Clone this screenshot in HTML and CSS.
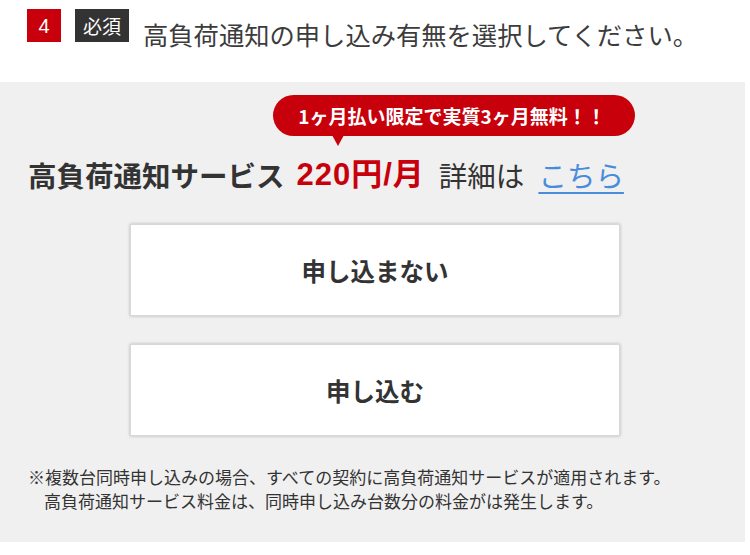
FILE: index.html
```html
<!DOCTYPE html>
<html lang="ja">
<head>
<meta charset="utf-8">
<link rel="stylesheet" href="styles.css">
</head>
<body>
<div class="header">
  <span class="badge badge-num">4</span>
  <span class="badge badge-req">必須</span>
  <span class="title">高負荷通知の申し込み有無を選択してください。</span>
</div>
<div class="panel">
  <div class="promo-row">
    <div class="promo">1ヶ月払い限定で実質3ヶ月無料！！</div>
  </div>
  <div class="service">
    <span class="name">高負荷通知サービス</span>
    <span class="price">220円/月</span>
    <span class="detail">詳細は</span>
    <a class="link" href="#">こちら</a>
  </div>
  <div class="buttons">
    <button class="choice">申し込まない</button>
    <button class="choice">申し込む</button>
  </div>
  <div class="notes">
    <p class="note">※複数台同時申し込みの場合、すべての契約に高負荷通知サービスが適用されます。</p>
    <p class="note indent">高負荷通知サービス料金は、同時申し込み台数分の料金がは発生します。</p>
  </div>
</div>
</body>
</html>
```

FILE: styles.css
```css
* { box-sizing: border-box; }
html, body {
  margin: 0;
  padding: 0;
  background: #fff;
  font-family: "Noto Sans CJK JP", "Noto Sans", sans-serif;
  color: #333;
}
.header {
  height: 82px;
  display: flex;
  align-items: flex-start;
  padding: 9px 0 0 27px;
}
.badge {
  height: 33px;
  display: flex;
  align-items: center;
  justify-content: center;
  color: #fff;
  font-size: 19px;
  line-height: 1;
}
.badge-num {
  width: 34px;
  background: #c8000b;
  font-family: "Liberation Sans", "Noto Sans", sans-serif;
  font-size: 20px;
}
.badge-req {
  width: 54px;
  margin-left: 14px;
  background: #333;
}
.title {
  margin-left: 14px;
  margin-top: 12px;
  font-size: 25.3px;
  line-height: 26px;
  color: #3c3c3c;
}
.panel {
  width: 745px;
  height: 460px;
  background: #f0f0f0;
  padding-top: 13px;
}
.promo-row {
  display: flex;
  padding-left: 273px;
}
.promo {
  position: relative;
  width: 362px;
  height: 41px;
  border-radius: 21px;
  background: #c8000b;
  color: #fff;
  font-weight: bold;
  font-size: 19px;
  display: flex;
  align-items: center;
  justify-content: center;
  padding-right: 4px;
}
.promo::after {
  content: "";
  position: absolute;
  left: 59px;
  top: 40px;
  border-left: 6px solid transparent;
  border-right: 6px solid transparent;
  border-top: 11px solid #c8000b;
}
.service {
  display: flex;
  align-items: center;
  height: 40px;
  margin-top: 19px;
  padding-left: 28px;
  font-size: 28.5px;
  line-height: 40px;
}
.name {
  font-weight: bold;
  color: #333;
}
.price {
  margin-left: 12px;
  font-weight: bold;
  color: #c8000b;
  font-family: "Liberation Sans", "Noto Sans CJK JP", sans-serif;
  font-size: 31px;
  letter-spacing: 1px;
}
.detail {
  margin-left: 14px;
  color: #333;
}
.link {
  margin-left: 14px;
  color: #4a8cdc;
  text-decoration: underline;
  text-decoration-thickness: 2px;
  text-underline-offset: 5px;
}
.buttons {
  display: flex;
  flex-direction: column;
  align-items: center;
  gap: 28px;
  margin-top: 29px;
  padding-left: 5px;
}
.choice {
  width: 490px;
  height: 92px;
  background: #fff;
  border: 1px solid #d8d8d8;
  box-shadow: 0 0 3px rgba(0, 0, 0, 0.25);
  font-family: "Noto Sans CJK JP", "Noto Sans", sans-serif;
  font-size: 24.5px;
  font-weight: bold;
  color: #333;
  padding: 0;
}
.notes {
  margin-top: 29px;
  padding-left: 28px;
}
.note {
  margin: 0;
  font-size: 17px;
  line-height: 23.5px;
  color: #333;
}
.indent {
  padding-left: 16px;
}
```
